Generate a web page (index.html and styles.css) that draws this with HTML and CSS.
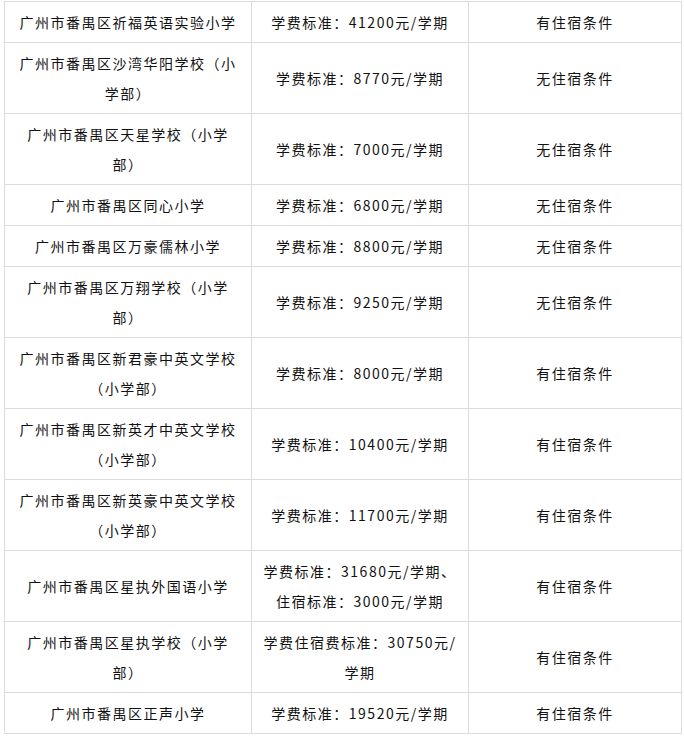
FILE: index.html
```html
<!DOCTYPE html>
<html lang="zh-CN">
<head>
<meta charset="utf-8">
<title>番禺区民办小学收费</title>
<link rel="stylesheet" href="styles.css">
</head>
<body>
<table class="fee-table">
  <colgroup>
    <col class="col-name">
    <col class="col-fee">
    <col class="col-stay">
  </colgroup>
  <tbody>
    <tr><td>广州市番禺区祈福英语实验小学</td><td>学费标准：41200元/学期</td><td>有住宿条件</td></tr>
    <tr><td>广州市番禺区沙湾华阳学校（小学部）</td><td>学费标准：8770元/学期</td><td>无住宿条件</td></tr>
    <tr><td>广州市番禺区天星学校（小学部）</td><td>学费标准：7000元/学期</td><td>无住宿条件</td></tr>
    <tr><td>广州市番禺区同心小学</td><td>学费标准：6800元/学期</td><td>无住宿条件</td></tr>
    <tr><td>广州市番禺区万豪儒林小学</td><td>学费标准：8800元/学期</td><td>无住宿条件</td></tr>
    <tr><td>广州市番禺区万翔学校（小学部）</td><td>学费标准：9250元/学期</td><td>无住宿条件</td></tr>
    <tr><td>广州市番禺区新君豪中英文学校（小学部）</td><td>学费标准：8000元/学期</td><td>有住宿条件</td></tr>
    <tr><td>广州市番禺区新英才中英文学校（小学部）</td><td>学费标准：10400元/学期</td><td>有住宿条件</td></tr>
    <tr><td>广州市番禺区新英豪中英文学校（小学部）</td><td>学费标准：11700元/学期</td><td>有住宿条件</td></tr>
    <tr><td>广州市番禺区星执外国语小学</td><td>学费标准：31680元/学期、住宿标准：3000元/学期</td><td>有住宿条件</td></tr>
    <tr><td>广州市番禺区星执学校（小学部）</td><td>学费住宿费标准：30750元/学期</td><td>有住宿条件</td></tr>
    <tr><td>广州市番禺区正声小学</td><td>学费标准：19520元/学期</td><td>有住宿条件</td></tr>
  </tbody>
</table>
</body>
</html>
```
FILE: styles.css
```css
html, body {
  margin: 0;
  padding: 0;
  background: #ffffff;
}

body {
  padding: 1px 0 0 4px;
  font-family: "Noto Sans CJK SC", "Noto Sans", sans-serif;
  font-size: 14px;
  color: #111111;
}

.fee-table {
  border-collapse: collapse;
  table-layout: fixed;
  width: 677px;
}

.col-name { width: 247px; }
.col-fee { width: 217px; }
.col-stay { width: 213px; }

.fee-table td {
  border: 1px solid #dcdcdc;
  padding: 5px 9px;
  line-height: 30px;
  letter-spacing: 1.5px;
  text-align: center;
  vertical-align: middle;
  word-break: normal;
  text-spacing-trim: space-all;
}
```
